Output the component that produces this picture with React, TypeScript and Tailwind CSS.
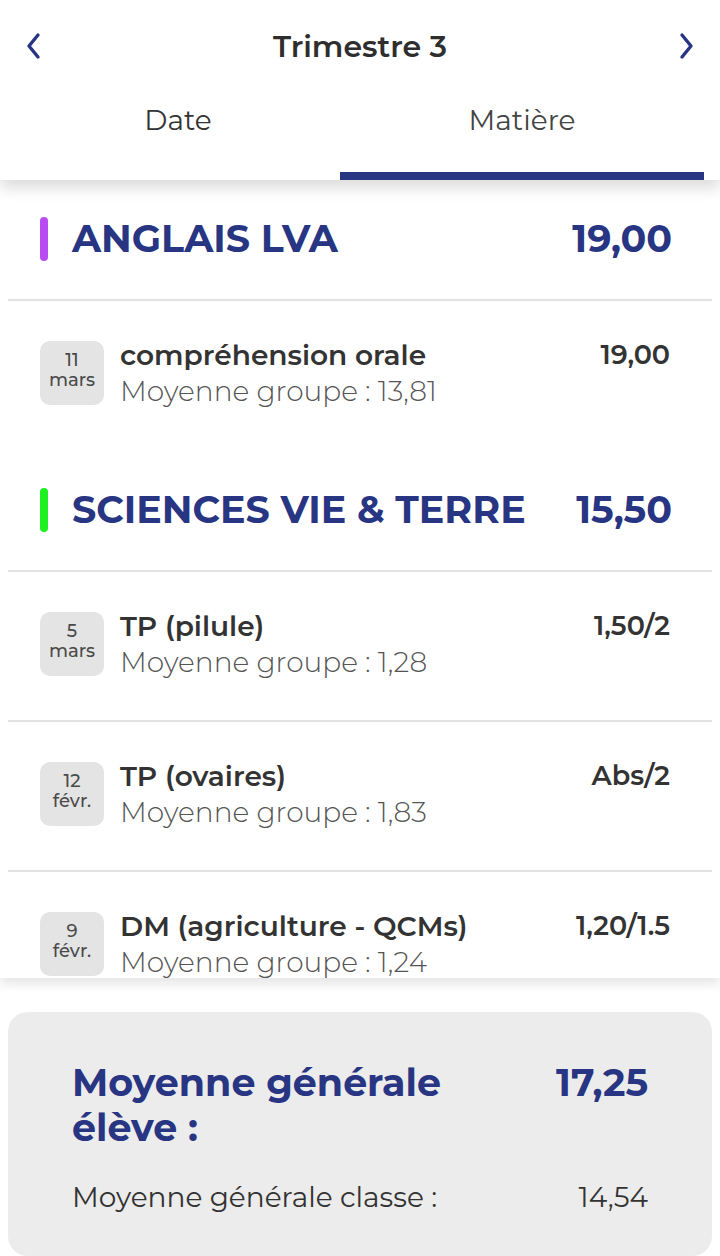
import React from 'react'

/*
Notes screen - grades by subject
*/

type Grade = {
    day: string;
    month: string;
    title: string;
    group: string;
    score: string;
};

type Subject = {
    name: string;
    color: string;
    average: string;
    grades: Grade[];
};

const subjects: Subject[] = [
    {
        name: 'ANGLAIS LVA',
        color: 'bg-[#b84bf2]',
        average: '19,00',
        grades: [
            { day: '11', month: 'mars', title: 'compréhension orale', group: '13,81', score: '19,00' },
        ],
    },
    {
        name: 'SCIENCES VIE & TERRE',
        color: 'bg-[#1ff021]',
        average: '15,50',
        grades: [
            { day: '5', month: 'mars', title: 'TP (pilule)', group: '1,28', score: '1,50/2' },
            { day: '12', month: 'févr.', title: 'TP (ovaires)', group: '1,83', score: 'Abs/2' },
            { day: '9', month: 'févr.', title: 'DM (agriculture - QCMs)', group: '1,24', score: '1,20/1.5' },
        ],
    },
];

const font = "font-['Montserrat','Inter','Open_Sans',sans-serif]";

const Chevron = ({ dir }: { dir: 'left' | 'right' }) => (
    <svg width="20" height="30" viewBox="0 0 20 30" fill="none">
        {dir == 'left'
            ? <polyline points="14,4 5,15 14,26" stroke="#283583" strokeWidth="3.4" strokeLinecap="round" strokeLinejoin="round" />
            : <polyline points="6,4 15,15 6,26" stroke="#283583" strokeWidth="3.4" strokeLinecap="round" strokeLinejoin="round" />
        }
    </svg>
);

const GradeRow = ({ grade, last }: { grade: Grade; last: boolean }) => (
    <div className={`h-[150px] mx-2 pt-10 pl-8 pr-[42px] flex ${last ? '' : 'border-b-2 border-[#e2e2e2]'}`}>
        {/* Date badge */}
        <div className="w-16 h-16 rounded-[10px] bg-[#e4e4e4] flex flex-col items-center justify-center leading-[20px] text-[18px] text-[#4a4a4a] font-medium shrink-0 pb-[6px]">
            <span>{grade.day}</span>
            <span>{grade.month}</span>
        </div>
        <div className="flex-1 ml-4 -mt-[4px]">
            <div className="flex justify-between items-start">
                <span className="text-[28px] leading-[36px] font-semibold text-[#333]">{grade.title}</span>
                <span className="text-[27px] leading-[36px] font-semibold text-[#333]">{grade.score}</span>
            </div>
            <div className="text-[28px] leading-[36px] font-light text-[#555]">Moyenne groupe : {grade.group}</div>
        </div>
    </div>
);

const App = () => {
    return (
        <div className={`w-[720px] h-[1256px] bg-white overflow-hidden flex flex-col ${font}`}>
            {/* Header */}
            <div className="relative z-10 bg-white h-[180px] shrink-0 shadow-[0_8px_14px_rgba(0,0,0,0.14)]">
                <div className="h-[92px] flex items-center justify-between px-6">
                    <Chevron dir="left" />
                    <h2 className="text-[30px] font-semibold text-[#2e2e2e]">Trimestre 3</h2>
                    <Chevron dir="right" />
                </div>
                <div className="flex h-[88px] px-4">
                    <div className="w-[324px] flex items-start justify-center pt-[7px]">
                        <span className="text-[28px] text-[#333]">Date</span>
                    </div>
                    <div className="flex-1 flex flex-col justify-between items-center pt-[7px]">
                        <span className="text-[28px] text-[#444]">Matière</span>
                        <div className="w-full h-2 bg-[#283583]" />
                    </div>
                </div>
            </div>

            {/* List */}
            <div className="h-[798px] shrink-0 overflow-hidden shadow-[0_6px_10px_rgba(0,0,0,0.10)] bg-white">
                {subjects.map((subject) => (
                    <div key={subject.name}>
                        <div className="h-[121px] mx-2 border-b-2 border-[#e2e2e2] flex items-center justify-between pl-8 pr-10 pb-[2px]">
                            <div className="flex items-center">
                                <div className={`w-2 h-11 rounded-full ${subject.color}`} />
                                <h1 className="ml-6 text-[38px] font-bold text-[#283583]">{subject.name}</h1>
                            </div>
                            <span className="text-[38px] font-bold text-[#283583]">{subject.average}</span>
                        </div>
                        {subject.grades.map((grade, i) => (
                            <GradeRow key={grade.title} grade={grade} last={i == subject.grades.length - 1 && subject.grades.length == 1} />
                        ))}
                    </div>
                ))}
            </div>

            {/* Summary card */}
            <div className="mt-[34px] mx-2 flex-1 rounded-[20px] bg-[#ececec] px-16 pt-[48px]">
                <div className="flex justify-between items-start">
                    <span className="text-[38px] leading-[45px] font-bold text-[#283583] w-[420px]">Moyenne générale élève :</span>
                    <span className="text-[38px] leading-[45px] font-bold text-[#283583]">17,25</span>
                </div>
                <div className="flex justify-between mt-[26px]">
                    <span className="text-[28px] text-[#333]">Moyenne générale classe :</span>
                    <span className="text-[28px] text-[#333]">14,54</span>
                </div>
            </div>
        </div>
    );
};

export default App;
